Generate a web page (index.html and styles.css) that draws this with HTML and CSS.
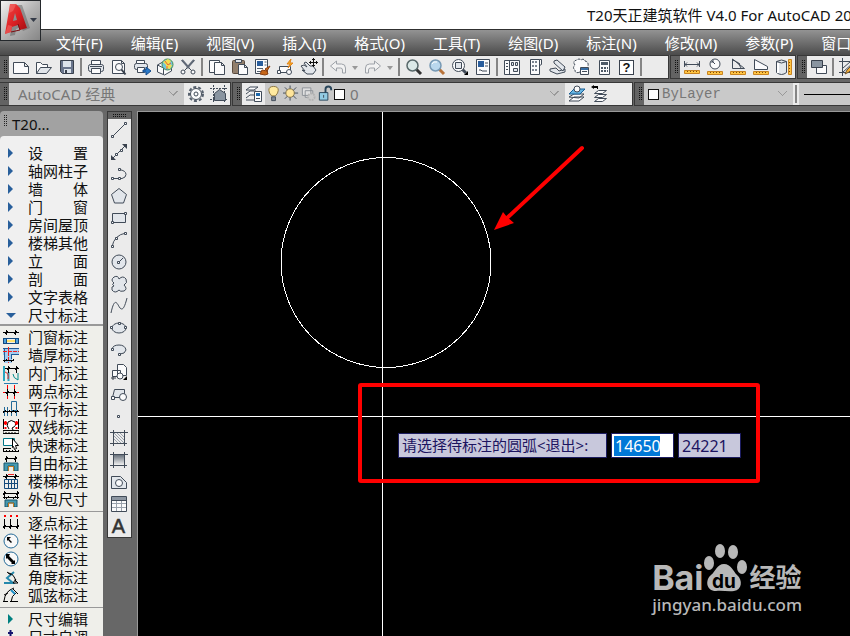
FILE: index.html
```html
<!DOCTYPE html>
<html lang="zh-CN">
<head>
<meta charset="utf-8">
<title>T20天正建筑软件 V4.0 For AutoCAD</title>
<link rel="stylesheet" href="styles.css">
</head>
<body>
<div class="app">
<header class="title-bar">
  <h1 class="title">T20天正建筑软件 V4.0 For AutoCAD 2014</h1>
  <button class="app-button" aria-label="应用程序菜单">
    <svg width="39" height="39" viewBox="0 0 39 39"><defs><linearGradient id="red" x2="1" y2="1"><stop stop-color="#f04a48"/><stop offset=".5" stop-color="#dc2023"/><stop offset="1" stop-color="#9c0c10"/></linearGradient></defs><path d="M7 34l5-31h7l8 23-7 3-2-4-5 2-1 6z" fill="#555" opacity=".45" transform="translate(2 1)"/><path fill-rule="evenodd" d="M4 33L9 3h6l4 4 7 20-7 2-2-5-6 2-1 5zM12 20l4-1-2-7z" fill="url(#red)"/><path d="M9 3l-1 9 4-2 2-4 1-3zM4 33l6-2 1-6-4-1z" fill="#f67874" opacity=".5"/><path d="M10 31l9-2-2-6" fill="none" stroke="#7c0c10" stroke-width="1"/><path d="M29 17h7l-3.500 4z" fill="#343b48"/></svg>
  </button>
</header>

<nav class="menu-bar">
  <button>文件(F)</button><button>编辑(E)</button><button>视图(V)</button><button>插入(I)</button><button>格式(O)</button><button>工具(T)</button><button>绘图(D)</button><button>标注(N)</button><button>修改(M)</button><button>参数(P)</button><button>窗口(W)</button>
</nav>

<div class="toolbar-row">
  <div class="toolbar standard">
    <span class="grip"></span>
    <button aria-label="新建"><svg viewBox="0 0 18 18"><path class="l w" d="M1.500 4.500h11l4 4v7h-15zM12.500 4.500v4h4"/></svg></button>
    <button aria-label="打开"><svg viewBox="0 0 18 18"><path class="l w" d="M1.500 15.500v-11h4l2 2h5v3"/><path class="l g" d="M1.500 15.500l4-6h11l-5 6z"/></svg></button>
    <button aria-label="保存"><svg viewBox="0 0 18 18"><path d="M2.500 2.500h13v13h-11l-2-2z" fill="#69758c" stroke="#39414d"/><path d="M5 3h8v6H5zM6 11h7v4H6z" fill="#dce3eb"/><path d="M7 12h2v3H7z" fill="#39414d"/></svg></button>
    <i class="sep"></i>
    <button aria-label="打印"><svg viewBox="0 0 18 18"><path class="l w" d="M4.500 7V2.500h9V7"/><rect class="l g" x="1.500" y="6.500" width="15" height="7" rx="2"/><path class="l w" d="M4.500 10.500h9v5h-9zM3 8.500h12"/></svg></button>
    <button aria-label="打印预览"><svg viewBox="0 0 18 18"><path class="l w" d="M2.500 2.500h9l3 3v10h-12zM11.500 2.500v3h3"/><circle class="l" cx="9" cy="9" r="3.500" fill="#d9e4ec"/><path d="M11.500 11.500l4 5" stroke="#39414d" stroke-width="2"/></svg></button>
    <button aria-label="发布"><svg viewBox="0 0 18 18"><path class="l w" d="M3.500 5.500v-3h8v3"/><rect class="l g" x="1.500" y="5.500" width="13" height="6" rx="2"/><path class="l w" d="M4.500 9.500h7v5h-7z"/><path d="M10 12h3V9l5 4-5 4v-3h-3z" fill="#2878c8" stroke="#174d8c"/></svg></button>
    <button aria-label="三维打印"><svg viewBox="0 0 18 18"><path class="l w" d="M1.500 7l7-4 7 3v7l-7 4-7-3zM1.500 7l6 3v6"/><circle cx="11.500" cy="6.500" r="5.500" fill="#72c7dd" stroke="#468c50"/><path d="M7 4l5-3 3 2-2 3 3 1-2 4-4-1V7z" fill="#f0e050"/><path d="M9 3l3 4 3-2M11 8v3" fill="none" stroke="#ec6138"/></svg></button>
    <button aria-label="剪切"><svg viewBox="0 0 18 18"><path class="l" d="M2.500 2.500l11 11M15.500 2.500l-11 11"/><path d="M3 2l7 8M15 2L8 10" stroke="#606977" stroke-width="2"/><circle class="l w" cx="4" cy="14" r="2"/><circle class="l w" cx="14" cy="14" r="2"/></svg></button>
    <i class="sep"></i>
    <button aria-label="复制"><svg viewBox="0 0 18 18"><path class="l w" d="M1.500 2.500h10v12h-10z"/><path class="l w" d="M6.500 4.500h7l3 3v9h-10zM13.500 4.500v3h3"/></svg></button>
    <button aria-label="粘贴"><svg viewBox="0 0 18 18"><rect x="1.500" y="2.500" width="12" height="13" rx="1" fill="#927f6c" stroke="#5a4b3e"/><path class="l g" d="M4.500 1.500h6v3h-6z"/><path class="l w" d="M7.500 6.500h6l3 3v7h-9zM13.500 6.500v3h3"/></svg></button>
    <button aria-label="特性匹配"><svg viewBox="0 0 18 18"><path class="l w" d="M1.500 1.500h12v14h-12z"/><path d="M3 3h6v5H3z" fill="#295d9c"/><path d="M10.500 4h2m-2 3h2M3 10.500h6M3 13.500h5" stroke="#55606e"/><path d="M16 8l-5 3 2 2zM8 12l5 1 1 3-3 1-5-1z" fill="#c66618" stroke="#8b3f10"/></svg></button>
    <button aria-label="块编辑器"><svg viewBox="0 0 18 18"><path class="l w" d="M2.500 8.500h11v6h-11z"/><path class="l w" d="M.500 12.500h3v3h-3z"/><circle class="l w" cx="12" cy="14" r="2.500"/><path d="M14 1l-4 5h3l-2 4 5-5h-3z" fill="#ffb51d" stroke="#df811c"/></svg></button>
    <button aria-label="平移"><svg viewBox="0 0 18 18"><path class="l g" d="M1 8l3-1 3 2-3-4 2-1 4 4h3l3 4-3 4H7l-5-4 3 1z"/><path stroke="#111" d="M13.500 0v9M9 4.500h9M12 1.500h3m-3 6h3M10.500 3v3m6-3v3"/></svg></button>
    <i class="sep"></i>
    <button class="muted" aria-label="放弃"><svg viewBox="0 0 18 18"><path class="l w" d="M1.500 8l6-5v3h5q4 0 4 4v5h-3v-3q0-2-2-2h-4v3z"/></svg></button>
    <button class="drop" aria-label="放弃列表"></button>
    <button class="muted" aria-label="重做"><svg viewBox="0 0 18 18"><path class="l w" d="M16.500 8l-6-5v3h-5q-4 0-4 4v5h3v-3q0-2 2-2h4v3z"/></svg></button>
    <button class="drop" aria-label="重做列表"></button>
    <i class="sep"></i>
    <button aria-label="实时缩放"><svg viewBox="0 0 18 18"><path d="M11 11l5 5" stroke="#333" stroke-width="3"/><circle cx="7.500" cy="7.500" r="5.500" fill="#dce9e8" stroke="#59696b" stroke-width="1.500"/></svg></button>
    <button aria-label="缩放上一个"><svg viewBox="0 0 18 18"><path d="M11 11l5 5" stroke="#b8733a" stroke-width="3"/><circle cx="7.500" cy="7.500" r="5.500" fill="#b9d7ed" stroke="#7799b4" stroke-width="1.500"/><path d="M4 6q1-3 5-2" stroke="#fff" fill="none"/></svg></button>
    <button aria-label="窗口缩放"><svg viewBox="0 0 18 18"><path d="M11 11l4 4" stroke="#414b58" stroke-width="3"/><circle class="l w" cx="7.500" cy="7.500" r="6"/><path class="l g" d="M4.500 4.500h6v6h-6z"/><path d="M17 13v4h-4z"/></svg></button>
    <button aria-label="特性"><svg viewBox="0 0 18 18"><path class="l w" d="M2.500 1.500h13v15h-13z"/><path d="M4 3h6v6H4z" fill="#295d9c"/><path d="M11 5h3m-3 3h3M5 12h2l1 1h5" class="l"/></svg></button>
    <i class="sep"></i>
    <button aria-label="设计中心"><svg viewBox="0 0 18 18"><path class="l w" d="M1.500 2.500h15v14h-15zM6.500 3v13"/><path class="l g" d="M8.500 4.500h2v3h-2zM12.500 4.500h2v3h-2zM10.500 10.500h4v3h-4z"/><path class="l" d="M3 5.500h2m-2 3h2m-2 3h2"/></svg></button>
    <button aria-label="工具选项板"><svg viewBox="0 0 18 18"><path class="l w" d="M4.500 1.500h9v15h-9zM13.500 1.500h2v5l-2 1"/><path d="M6 4h6M6 8h6M6 12h6" stroke="#7c8591" stroke-width="2" stroke-dasharray="2 1"/></svg></button>
    <button aria-label="图纸集"><svg viewBox="0 0 18 18"><path class="l g" d="M1 11l6-1 3 3 6-2v3l-8 2-7-3z"/><path class="l g" d="M5 3l3-1 8 7-2 4-9-8z"/></svg></button>
    <button aria-label="标记集"><svg viewBox="0 0 18 18"><path class="l w" stroke-dasharray="3 1" d="M8 14q-5 2-5-2-3-2 0-5-3-4 2-5 2-2 4 0 3-2 4 1 4 1 3 5"/><path class="l w" d="M8.500 9.500h8v7h-8z"/><path d="M9 10h7v2H9z" fill="#376da5"/><path class="l" d="M10 13.500h5"/></svg></button>
    <button aria-label="计算器"><svg viewBox="0 0 18 18"><path class="l w" d="M4.500 2.500h10v14h-10z"/><path d="M6 4h7v3H6z" fill="#4e5966"/><path d="M6 10h7m-7 3h7" stroke="#4e5966" stroke-width="2" stroke-dasharray="2 1"/></svg></button>
    <button class="help-button" aria-label="帮助"><span>?</span></button>
    <i class="sep"></i>
    <span class="spare"></span>
  </div>
  <div class="toolbar">
    <span class="grip"></span>
    <button aria-label="测量距离"><svg viewBox="0 0 18 18"><path class="l" d="M1.500 3v6m15-6v6M2 6.500h14M4 4.500l-2 2 2 2m10-4l2 2-2 2"/><path class="ruler" d="M1.500 12.500h15v3h-15z"/><path class="ticks" d="M4.500 13v1m3-1v1m3-1v1m3-1v1"/></svg></button>
    <button aria-label="测量半径"><svg viewBox="0 0 18 18"><circle class="l w" cx="9" cy="6" r="5"/><path class="l" d="M9 6L6 3v2m0-2h2"/><path class="ruler" d="M1.500 13.500h15v3h-15z"/><path class="ticks" d="M4.500 14v1m3-1v1m3-1v1m3-1v1"/></svg></button>
    <button aria-label="测量角度"><svg viewBox="0 0 18 18"><path class="l" d="M3.500 1v9.500h12zM3 2q6 1 9 8M8 4l3 2"/><path class="ruler" d="M1.500 13.500h15v3h-15z"/><path class="ticks" d="M4.500 14v1m3-1v1m3-1v1m3-1v1"/></svg></button>
    <button aria-label="测量面积"><svg viewBox="0 0 18 18"><path class="l w" d="M2.500 1.500l13 7v3h-13z"/><path class="ruler" d="M1.500 13.500h15v3h-15z"/><path class="ticks" d="M4.500 14v1m3-1v1m3-1v1m3-1v1"/></svg></button>
    <button aria-label="测量体积"><svg viewBox="0 0 18 18"><path class="l g" d="M1.500 3.500v11q5 4 10 0v-11q-5-3-10 0 5 3 10 0"/><path d="M3 5v10" stroke="#fff" stroke-width="2"/><path class="ruler" d="M13.500 1.500h3v15h-3z"/><path class="ticks" d="M14 4.500h1m-1 3h1m-1 3h1m-1 3h1"/></svg></button>
  </div>
  <div class="toolbar fill">
    <span class="grip"></span>
    <button aria-label="绘图次序"><svg viewBox="0 0 18 18"><path class="l w" d="M6.500 7.500h10v8h-10z"/><path d="M1.500 2.500h11v7h-11z" fill="#8994a0" stroke="#39414d"/></svg></button>
    <i class="sep"></i>
    <button aria-label="编辑图案填充"><svg viewBox="0 0 18 18"><path class="l" d="M0 3.500h18M3.500 0v18M0 14.500h12M14.500 0v8M4 10l7-6M4 14l10-9"/><path d="M6 16l2-4 8-8 2 2-8 8z" fill="#f4af36" stroke="#6e5330"/></svg></button>
  </div>
</div>

<div class="toolbar-row">
  <div class="toolbar">
    <span class="grip"></span>
    <select class="combo workspace" aria-label="工作空间"><option>AutoCAD 经典</option></select>
    <button aria-label="工作空间设置"><svg viewBox="0 0 18 18"><circle cx="9" cy="9" r="7" fill="none" stroke="#56606d" stroke-width="2" stroke-dasharray="3 2"/><circle class="l w" cx="9" cy="9" r="5.500"/><circle class="l" cx="9" cy="9" r="2"/></svg></button>
    <button aria-label="我的工作空间"><svg viewBox="0 0 18 18"><path class="l" stroke-dasharray="2 1" d="M0 3.500h18M3.500 0v18M0 14.500h18M14.500 0v18"/><path class="l house" d="M4.500 8.500l5-4 6 4v7h-11z"/></svg></button>
  </div>
  <div class="toolbar layers">
    <span class="grip"></span>
    <button aria-label="图层特性管理器"><svg viewBox="0 0 18 18"><path class="l w" d="M1 5l4-3h8L9 5zM1 9l4-3h6M1 13l4-3h4M1 15h8"/><path class="l w" d="M9.500 6.500h7v10h-7z"/><path d="M11 8h4v3h-4z" fill="#1d68ac"/><path class="l" d="M11 13.500h4"/></svg></button>
    <div class="combo layer-combo">
      <svg viewBox="0 0 18 18"><path d="M6 11Q3 8 3 5q0-4 5-4t5 4q0 3-3 6z" fill="#ffeaa0" stroke="#8b7540"/><path d="M6 12h4v4H6z" fill="#838d9b" stroke="#414b58"/></svg>
      <svg viewBox="0 0 18 18"><path class="l" d="M7.500 0v16M0 8h16M2 2l12 12M14 2L2 14"/><circle cx="7.500" cy="8" r="4.500" fill="#ffe59a" stroke="#80714a"/></svg>
      <svg class="muted" viewBox="0 0 18 18"><path class="l w" d="M2.500 2.500h9v8h-9zM5.500 5.500h8v7h-8z"/><circle cx="12" cy="12" r="3.500" fill="#ccc" stroke="#999" stroke-width="2" stroke-dasharray="2 1"/></svg>
      <svg viewBox="0 0 18 18"><path class="lock" d="M2.500 7.500h9v8h-9z"/><path d="M9 8V4q0-3 3-3t3 3v1" fill="none" stroke="#28455a" stroke-width="2"/><path class="l" d="M7 10v3"/></svg>
      <span class="swatch"></span>
      <select class="combo" aria-label="图层"><option>0</option></select>
    </div>
    <button aria-label="将对象的图层置为当前"><svg viewBox="0 0 18 18"><path class="l w" d="M1 16l5-4h10l-5 4zM1 12l5-3h10l-5 4z"/><path d="M1 9l5-5h11l-5 5z" fill="#68b5e2" stroke="#165f96"/><circle class="l w" cx="9" cy="4" r="3"/></svg></button>
    <button aria-label="上一个图层"><svg viewBox="0 0 18 18"><path class="l w" d="M3.500 16.500l4-3h8l-4 3zM3.500 12.500l4-3h8l-4 3zM3.500 8.500l4-3h8l-4 3z"/><path d="M0 2l3-2v1h4v3H6V3H3v1z"/></svg></button>
  </div>
  <div class="toolbar fill">
    <span class="grip"></span>
    <div class="combo color-combo"><span class="swatch"></span><select class="combo bylayer" aria-label="颜色"><option>ByLayer</option></select></div>
    <i class="sep"></i>
    <button class="combo line-combo" aria-label="线型"><span></span></button>
  </div>
</div>

<main class="work">
  <aside class="panel">
    <h2>T20...</h2>
    <ul class="group first">
      <li><button><i class="tri"></i><span>设</span><span>置</span></button></li>
      <li><button><i class="tri"></i><span>轴网柱子</span></button></li>
      <li><button><i class="tri"></i><span>墙</span><span>体</span></button></li>
      <li><button><i class="tri"></i><span>门</span><span>窗</span></button></li>
      <li><button><i class="tri"></i><span>房间屋顶</span></button></li>
      <li><button><i class="tri"></i><span>楼梯其他</span></button></li>
      <li><button><i class="tri"></i><span>立</span><span>面</span></button></li>
      <li><button><i class="tri"></i><span>剖</span><span>面</span></button></li>
      <li><button><i class="tri"></i><span>文字表格</span></button></li>
      <li><button><i class="tri open"></i><span>尺寸标注</span></button></li>
    </ul>
    <ul class="group">
      <li><button><svg viewBox="0 0 16 16"><path class="k" d="M0 3.500h16M3.500 1v5m9-5v5M2 5l3-3m6 3l3-3"/><path d="M0 9.500h16M0 14.500h16M.500 9v6m3-6v6m9-6v6m3-6v6" stroke="#124a80"/><path d="M4 11h8v2H4z" fill="#ffe36c"/><path d="M1 10h2v4H1zM13 10h2v4h-2z" fill="#4aa0dc"/></svg><span>门窗标注</span></button></li>
      <li><button><svg viewBox="0 0 16 16"><path d="M0 1h16v7H9v8H1V8H0z" fill="#a4cdf0"/><path d="M0 1.500h16M9 7.500h7M8.500 7v5M1.500 1v14" stroke="#1e5b98"/><path d="M0 4.500h16M5.500 0v16" stroke="#f02020" stroke-dasharray="4 1"/><path class="k" d="M0 13.500h11M1 15l3-3m4 3l3-3"/></svg><span>墙厚标注</span></button></li>
      <li><button><svg viewBox="0 0 16 16"><path d="M1 1v15" stroke="#2aa5c0" stroke-width="2"/><path d="M5.500 7v9" stroke="#2aa5c0" stroke-width="2"/><path d="M2 7q4 1 3 7" stroke="#e22" fill="none"/><path class="k" d="M2 3.500h14M5.500 1v7m8-7v7M4 5l3-3m5 3l3-3"/><path d="M10 9q0 4 5 6V8" stroke="#008b8b" fill="none"/></svg><span>内门标注</span></button></li>
      <li><button><svg viewBox="0 0 16 16"><path d="M1 .500h14" stroke="#287eb0"/><path d="M4.500 2v4m7-4v4m-7 6v4m7-4v4M0 9.500h3m10 0h3" stroke="red"/><path class="k" d="M2 9.500h12M4.500 6v7m7-7v7M3 11l3-3m4 3l3-3"/></svg><span>两点标注</span></button></li>
      <li><button><svg viewBox="0 0 16 16"><path d="M8.500.500h5v9h-5zM1.500 6v9m3-9v9m4-5v5m5-5v5" stroke="#246c9a" fill="none"/><path class="k" d="M0 10.500h16M0 12l3-3m1 3l3-3m1 3l3-3m1 3l3-3"/></svg><span>平行标注</span></button></li>
      <li><button><svg viewBox="0 0 16 16"><path d="M1 1h14v9H1z" fill="#fff"/><path class="k" d="M.500 0v10m15-10v10M0 11.500h16v3H0zM3 13v2m3-2v2m3-2v2m3-2v2M6 10q-3-3-1-7 3-3 7 0 2 4-3 6l1 2"/><path d="M1 4h3M2.500 2v4M12 4h3M13.500 2v4M2.500 8v2m11-2v2" stroke="red" stroke-width="2"/></svg><span>双线标注</span></button></li>
      <li><button><svg viewBox="0 0 16 16"><path d="M.500 1.500h11v7H.500z" fill="#fff" stroke="#078"/><path d="M9.500 1.500l6 7h-3l1 3-2 1-1-3-1 1z" fill="#fff" stroke="#000"/><path class="k" d="M0 11.500h8M0 14.500h16M.500 11v4m3-2v2m3-2v2m3-2v2m3-2v2m3-2v2"/></svg><span>快速标注</span></button></li>
      <li><button><svg viewBox="0 0 16 16"><path class="k" d="M2 3.500h12M3.500 1v6m9-6v6M2 5l3-3m6 3l3-3"/><path d="M1 16V8h14v8h-4v-5H5v5z" fill="#459ab1" stroke="#19546b"/><path d="M5.500 16v-4.500h5V16" fill="none" stroke="#c17b23"/></svg><span>自由标注</span></button></li>
      <li><button><svg viewBox="0 0 16 16"><path class="k" d="M0 3.500h16M3.500 1v5m9-5v5M2 5l3-3m6 3l3-3"/><path d="M5 1.500h6" stroke="#e22"/><path d="M1.500 6.500h13v9h-13zM5.500 7v8m3-8v8m3-8v8M2 10.500h12" fill="none" stroke="#164b7b"/></svg><span>楼梯标注</span></button></li>
      <li><button><svg viewBox="0 0 16 16"><path class="k" d="M0 2.500h16M1.500 0v8m13-8v8M0 6.500h16M0 4l3-3m10 3l3-3M3 8l3-3m4 3l3-3"/><path d="M2 16V9h12v7h-3v-4H5v4z" fill="#459ab1" stroke="#19546b"/><path d="M5.500 16v-4h5v4" fill="none" stroke="#c17b23"/></svg><span>外包尺寸</span></button></li>
    </ul>
    <ul class="group">
      <li><button><svg viewBox="0 0 16 16"><path d="M1 1h2m4 0h2m4 0h2" stroke="red" stroke-width="2"/><path class="k" d="M0 11.500h16M1.500 4v10m6-10v10m7-10v10M0 13l3-3m3 3l3-3m4 3l3-3"/></svg><span>逐点标注</span></button></li>
      <li><button><svg viewBox="0 0 16 16"><circle cx="8" cy="8" r="7" fill="#f8f8f8" stroke="#266b98"/><path d="M4 4h4L6 6l3 3-1 1-3-3-1 1z"/></svg><span>半径标注</span></button></li>
      <li><button><svg viewBox="0 0 16 16"><circle cx="8" cy="8" r="7" fill="#f8f8f8" stroke="#266b98"/><path d="M3 3h4L6 5l5 5 1-1v4H8l1-1-5-5-1 1z"/></svg><span>直径标注</span></button></li>
      <li><button><svg viewBox="0 0 16 16"><path d="M1 14h9L4 9l7-6" fill="none" stroke="#2589ac" stroke-width="2"/><path class="k" d="M5 4q6 0 8 9M4 3l4 3m4 5l3 3h-5l3-4"/></svg><span>角度标注</span></button></li>
      <li><button><svg viewBox="0 0 16 16"><path class="k" d="M1 14Q2 4 11 1M8 15q0-6 6-10M1 8l4-2m5-4l5 5M0 14.500h5m2 0h8"/><path d="M8 3l4 4" fill="none" stroke="#1c90c8" stroke-width="2"/></svg><span>弧弦标注</span></button></li>
    </ul>
    <ul class="group">
      <li><button><i class="tri teal"></i><span>尺寸编辑</span></button></li>
      <li><button><svg viewBox="0 0 16 16"><path d="M7.500 1v14M5 4h5M5 9h5" stroke="#14146e" stroke-width="2"/></svg><span>尺寸自调</span></button></li>
    </ul>
  </aside>

  <div class="draw-tools">
    <span class="grip-h"></span>
    <button aria-label="直线"><svg viewBox="0 0 18 18"><path class="l" d="M3 15L15 3"/><path class="l w" d="M1.500 14.500h2v2h-2zM14.500 1.500h2v2h-2z"/></svg></button>
    <button aria-label="构造线"><svg viewBox="0 0 18 18"><path class="l" d="M2 16L16 2"/><path d="M1 17v-5l5 5zM17 1v5l-5-5z" fill="#39414d"/><path class="l w" d="M5.500 10.500h2v2h-2zM10.500 6.500h2v2h-2z"/></svg></button>
    <button aria-label="多段线"><svg viewBox="0 0 18 18"><path class="l" d="M2 13.500h10q4-1 4-4 0-4-7-5"/><path class="l w" d="M1.500 12.500h2v2h-2zM8.500 12.500h2v2h-2zM8.500 3.500h2v2h-2z"/></svg></button>
    <button aria-label="正多边形"><svg viewBox="0 0 18 18"><path class="l g" d="M9 1.500l7.500 6-3 8.500h-9l-3-8.500z"/></svg></button>
    <button aria-label="矩形"><svg viewBox="0 0 18 18"><path class="l g" d="M2.500 4.500h13v9h-13z"/><path class="l w" d="M1.500 12.500h2v2h-2zM14.500 3.500h2v2h-2z"/></svg></button>
    <button aria-label="圆弧"><svg viewBox="0 0 18 18"><path class="l" d="M2 16Q4 4 16 2"/><path class="l w" d="M1.500 14.500h2v2h-2zM5.500 6.500h2v2h-2zM14.500 1.500h2v2h-2z"/></svg></button>
    <button aria-label="圆"><svg viewBox="0 0 18 18"><circle class="l g" cx="9" cy="9" r="7"/><path class="l" d="M9 9l4-4"/><path class="l w" d="M7.500 8.500h2v2h-2z"/></svg></button>
    <button aria-label="修订云线"><svg viewBox="0 0 18 18"><path class="l g" d="M4 8Q0 5 4 2q4-2 5 2 4-4 7 0 2 4-2 6 4 4 0 6-4 1-5-1-4 4-7 0-1-4 2-4-3-2 0-3"/></svg></button>
    <button aria-label="样条曲线"><svg viewBox="0 0 18 18"><path class="l" d="M1 16C5-3 8 9 10 11s4 2 7-10"/></svg></button>
    <button aria-label="椭圆"><svg viewBox="0 0 18 18"><ellipse class="l g" cx="9" cy="9" rx="7" ry="5"/><path class="l w" d="M.500 7.500h2v2h-2zM14.500 7.500h2v2h-2zM8.500 3.500h2v2h-2z"/></svg></button>
    <button aria-label="椭圆弧"><svg viewBox="0 0 18 18"><path class="l g" d="M2 8Q3 4 9 4t7 5q-1 4-6 4"/><path class="l w" d="M1.500 7.500h2v2h-2zM8.500 12.500h2v2h-2z"/></svg></button>
    <button aria-label="插入块"><svg viewBox="0 0 18 18"><path class="l w" d="M7.500 1.500h6l3 3v8h-9zM2.500 7.500h8v6h-8z"/><circle class="l w" cx="10" cy="13" r="3"/><path d="M1 15h5M3 13v4" stroke="#39414d"/><path d="M17 13v4h-4z"/></svg></button>
    <button aria-label="创建块"><svg viewBox="0 0 18 18"><path class="l g" d="M4.500 4.500h10v8h-12z"/><circle class="l w" cx="13" cy="12" r="3.500"/><path class="l w" d="M1.500 11.500h3v3h-3z"/></svg></button>
    <button aria-label="点"><svg viewBox="0 0 18 18"><path class="l w" d="M7.500 8.500h2v2h-2z"/></svg></button>
    <button aria-label="图案填充"><svg viewBox="0 0 18 18"><path class="hatch" d="M4 4l10 10M7 4l7 7M4 7l7 7M10 4l4 4M4 10l4 4"/><path class="l" d="M0 3.500h18M3.500 1v16M0 14.500h17M14.500 1v16"/></svg></button>
    <button aria-label="渐变色"><svg viewBox="0 0 18 18"><defs><linearGradient id="fade" x2="0" y2="1"><stop stop-color="#68717c"/><stop offset="1" stop-color="#f2f2f2"/></linearGradient></defs><path fill="url(#fade)" d="M4 4h10v10H4z"/><path class="l" d="M0 3.500h18M3.500 1v16M0 14.500h17M14.500 1v16"/></svg></button>
    <button aria-label="面域"><svg viewBox="0 0 18 18"><path class="l g" d="M1.500 3.500h9l6 6v6h-15z"/><circle class="l w" cx="9" cy="10" r="3.500"/></svg></button>
    <button aria-label="表格"><svg viewBox="0 0 18 18"><path class="l w" d="M1.500 1.500h15v15h-15z"/><path d="M2 2h14v3H2z" fill="#8d96a2"/><path class="thin" d="M2 8.500h14M2 12.500h14M6.500 5v11M11.500 5v11"/><path class="l" d="M1 5.500h16"/></svg></button>
    <button class="text-tool" aria-label="多行文字">A</button>
  </div>

  <section class="canvas" aria-label="绘图区">
    <svg class="drawing">
      <g shape-rendering="crispEdges" stroke="#fff" fill="none"><line x1="244.500" y1="0" x2="244.500" y2="100%"/><line x1="0" y1="304.500" x2="100%" y2="304.500"/><circle cx="248" cy="150.500" r="105"/></g>
      <rect x="222" y="273" width="398" height="96" rx="1" fill="none" stroke="#f00" stroke-width="4"/>
      <path d="M444 36L368 107" stroke="#f00" stroke-width="4" stroke-linecap="round"/><path d="M356 118l9-18 4 5 7 6z" fill="#f00"/>
    </svg>
    <form class="prompt"><label for="px">请选择待标注的圆弧&lt;退出&gt;:</label><input id="px" class="active" value="14650"><input aria-label="Y" value="24221"></form>
    <div class="watermark">
      <div class="brand"><span>Bai</span><svg width="46" height="50" viewBox="0 0 46 50"><g fill="#b8b8b8"><ellipse cx="7" cy="20" rx="5" ry="7"/><ellipse cx="18" cy="8" rx="5" ry="7"/><ellipse cx="31" cy="9" rx="5" ry="7"/><ellipse cx="40" cy="24" rx="5" ry="7"/><path d="M22 21c7 0 9 7 13 11 6 5 5 15-3 16-6 1-12-1-18 0-10 0-11-11-5-16 5-4 6-11 13-11z"/></g><text x="10" y="45" class="du">du</text></svg><span class="cn">经验</span></div>
      <div class="url">jingyan.baidu.com</div>
    </div>
  </section>
</main>
</div>
</body>
</html>
```
FILE: styles.css
```css
* { box-sizing: border-box; }
body {
  margin: 0;
  font: 15px/18px "Noto Sans", "Noto Sans CJK SC", sans-serif;
  color: #111;
}
button, input, select { margin: 0; padding: 0; border: 0; font: inherit; color: inherit; background: none; }
ul, h1, h2 { margin: 0; padding: 0; list-style: none; font: inherit; }

.app { display: flex; flex-direction: column; height: 100vh; overflow: hidden; background: #676767; }

.title-bar { position: relative; flex: none; height: 29px; background: #fff; }
.title { padding: 5px 0 0 587px; line-height: 20px; white-space: nowrap; overflow: hidden; }
.app-button {
  position: absolute; left: 0; top: 0; z-index: 1;
  width: 41px; height: 41px;
  border: 1px solid #24282c;
  background: linear-gradient(135deg, #f2f2f2, #b5b5b5 50%, #868686);
}
.app-button svg { display: block; }

.menu-bar {
  display: flex; gap: 28px; flex: none; height: 26px; padding-left: 56px;
  border-top: 1px solid #303030;
  background: linear-gradient(#939393, #4b4b4b);
  color: #fff; overflow: hidden;
}
.menu-bar button { flex: none; white-space: nowrap; }

.toolbar-row { display: flex; gap: 1px; flex: none; height: 24px; margin-bottom: 3px; }
.toolbar {
  display: flex; align-items: stretch; flex: none;
  border: 1px solid #383838; background: #ebebeb;
}
.toolbar:first-child { border-left: 0; }
.toolbar.fill { flex: 1; min-width: 0; overflow: hidden; border-right: 0; }
.toolbar button { flex: none; width: 23px; padding: 2px 0; line-height: 0; }
.toolbar svg, .draw-tools svg { width: 18px; height: 18px; }
.grip, .grip-h {
  flex: none; border: solid #636363;
  background: linear-gradient(90deg, #636363 1px, transparent 1px) 0 0 / 2px 2px, linear-gradient(#636363 1px, #111 1px) 0 0 / 2px 2px;
}
.grip { width: 9px; border-width: 3px 2px 4px 3px; }
.sep { flex: none; width: 2px; margin: 2px; background: #858585; }
.toolbar .drop { width: 12px; }
.drop::before { content: ""; display: inline-block; border: 3px solid transparent; border-top: 4px solid #999; border-bottom: 0; }
.spare { width: 24px; }
.help-button span {
  display: inline-block; width: 15px; height: 15px; border: 1px solid #39414d;
  background: #fff; font: bold 13px/13px "Liberation Sans", sans-serif;
}
.l { fill: none; stroke: #414b58; }
.w { fill: #fbfbfc; }
.g { fill: #e2e6eb; }
.k { fill: none; stroke: #000; }
.house { fill: #8994a0; }
.lock { fill: #92cbe3; stroke: #28455a; }
.hatch, .thin { fill: none; stroke: #9aa2ac; }
.ruler { fill: #ffc543; stroke: #c98420; }
.ticks { stroke: #7d4b10; }
.muted { opacity: .45; }

.combo { background-color: #c9c9c9; color: #777; }
select.combo {
  appearance: none; flex: 1; min-width: 0; border-radius: 0; opacity: 1;
  background-image: linear-gradient(45deg, transparent 45%, #999 45% 60%, transparent 60%), linear-gradient(-45deg, transparent 45%, #999 45% 60%, transparent 60%);
  background-size: 5px 5px; background-repeat: no-repeat;
  background-position: right 10px top 8px, right 6px top 8px;
}
.toolbar .workspace { flex: none; width: 175px; padding-left: 9px; }
.layer-combo { display: flex; align-items: center; width: 300px; padding-left: 1px; }
.layer-combo svg { flex: none; width: 17px; }
.swatch { flex: none; width: 11px; height: 11px; border: 1px solid #111; background: #fff; }
.layer-combo select { align-self: stretch; padding-left: 5px; }
.layers { width: 401px; }
.color-combo { display: flex; align-items: center; width: 149px; padding-left: 4px; }
.bylayer { align-self: stretch; padding-left: 3px; font: 14px "Liberation Mono", monospace; }
.toolbar .line-combo { flex: 1; padding-left: 5px; }
.line-combo span { display: block; height: 1px; background: #000; }

.work { display: flex; flex: 1; min-height: 0; padding-top: 2px; }
.panel { flex: none; width: 103px; overflow: hidden; border-radius: 4px 4px 0 0; background: #a2a2a2; }
.panel h2 { height: 25px; padding: 4px 12px; }
.panel h2::before {
  content: ""; float: left; width: 4px; height: 12px; margin: -1px 0 0 -9px;
  background: linear-gradient(90deg, #a2a2a2 1px, transparent 1px) 0 0 / 2px 2px, linear-gradient(#a2a2a2 1px, #222 1px) 0 0 / 2px 2px;
  margin-right: 5px;
}
.group { padding: 2px 0 3px; background: #efefea; border-bottom: 1px solid #999; }
.group.first { padding: 8px 0 0; border-radius: 4px 4px 0 0; background: #f0f0f0; border-bottom-width: 2px; }
.group button { display: flex; align-items: center; width: 88px; height: 18px; padding-left: 28px; white-space: nowrap; }
.group span:last-child { margin-left: auto; }
.group svg { flex: none; width: 16px; height: 16px; margin: 0 9px 0 -25px; }
.tri { flex: none; margin: 0 15px 0 -20px; border: 5px solid transparent; border-left-color: #285f9b; border-right: 0; }
.tri.open { margin: 0 12px 0 -22px; border: 5px solid transparent; border-top-color: #285f9b; border-bottom: 0; }
.tri.teal { border-left-color: #008080; }

.draw-tools {
  display: flex; flex-direction: column; flex: none; align-self: flex-start;
  width: 25px; margin-left: 4px; border: 1px solid #383838; background: #ebebeb;
}
.grip-h { height: 7px; border-width: 1px 5px 2px 4px; }
.draw-tools button { height: 22px; padding-right: 2px; line-height: 0; }
.draw-tools .text-tool { font: 20px/22px "Liberation Sans", sans-serif; color: #333; -webkit-text-stroke: .5px #333; }

.canvas { position: relative; flex: 1; min-width: 0; margin-left: 5px; border: solid #999; border-width: 1px 0 0 1px; background: #000; overflow: hidden; }
.drawing { display: block; width: 100%; height: 100%; }
.prompt { position: absolute; left: 260px; top: 321px; display: flex; gap: 4px; color: #1c1460; }
.prompt label, .prompt input { height: 25px; border: 1px solid #1c1c60; background-color: #c8c8dc; padding: 0 3px; line-height: 23px; }
.prompt label { width: 209px; }
.prompt input { width: 63px; font-size: 16px; }
.prompt .active { color: #fff; background: linear-gradient(#0078d7, #0078d7) 2px 2px / 46px 20px no-repeat #fff; }

.watermark { position: absolute; right: 48px; bottom: 19px; color: #b8b8b8; }
.brand { display: flex; align-items: flex-end; height: 50px; font: bold 34px/30px Inter, sans-serif; }
.brand svg { flex: none; margin-left: -2px; }
.brand .cn { margin-left: 2px; font: bold 26px/34px "Noto Sans CJK SC", sans-serif; }
.du { fill: #000; font: bold 19px Inter, sans-serif; }
.url { font: 500 17px/24px "Noto Sans", sans-serif; }
```
